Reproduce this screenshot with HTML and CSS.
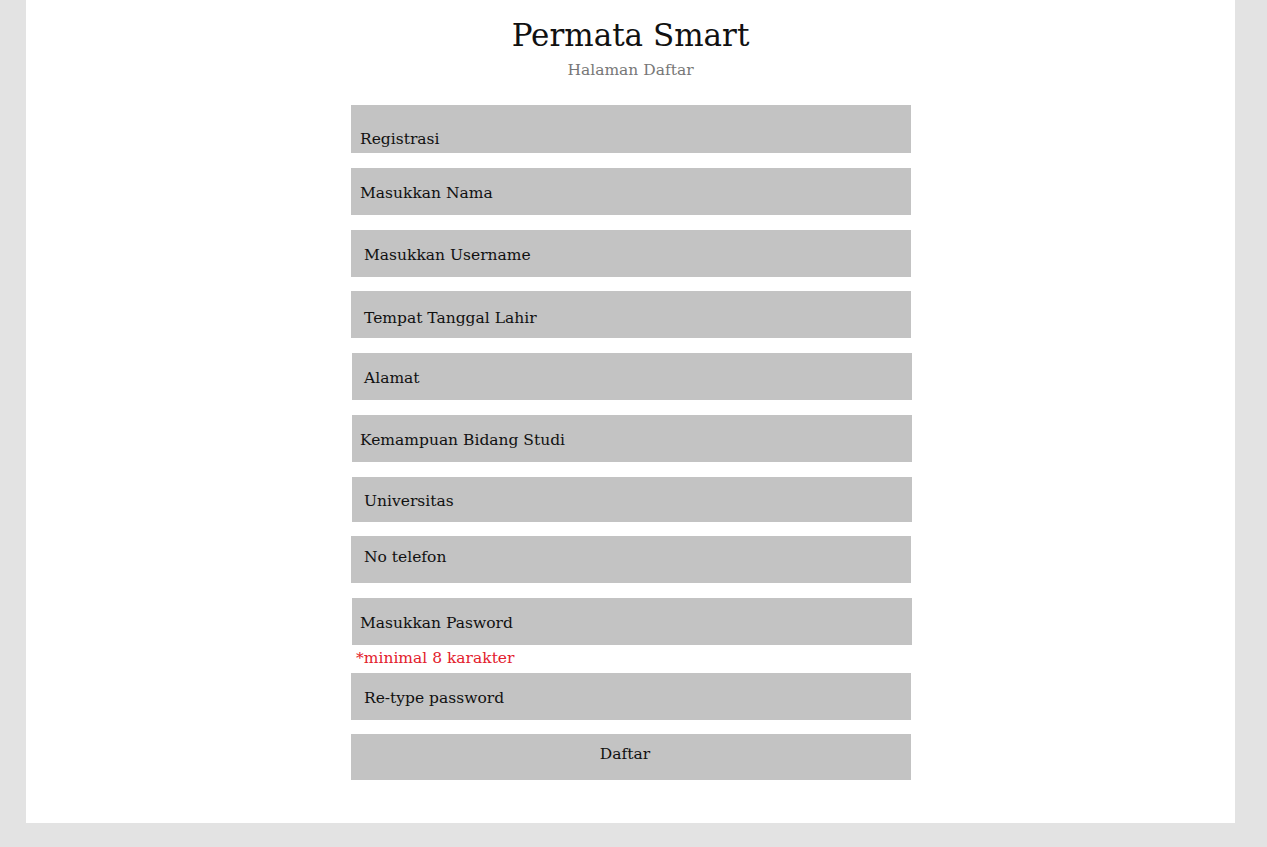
FILE: index.html
```html
<!DOCTYPE html>
<html lang="id">
<head>
<meta charset="utf-8">
<title>Permata Smart - Halaman Daftar</title>
<link rel="stylesheet" href="styles.css">
</head>
<body>
<div class="page">
  <div class="card">
    <header class="head">
      <h1 class="title">Permata Smart</h1>
      <p class="subtitle">Halaman Daftar</p>
    </header>
    <form class="form">
      <div class="field field-top narrow">Registrasi</div>
      <div class="field narrow">Masukkan Nama</div>
      <div class="field wide">Masukkan Username</div>
      <div class="field wide low">Tempat Tanggal Lahir</div>
      <div class="field wide shift">Alamat</div>
      <div class="field narrow shift">Kemampuan Bidang Studi</div>
      <div class="field wide shift short">Universitas</div>
      <div class="field wide high">No telefon</div>
      <div class="field narrow shift">Masukkan Pasword</div>
      <div class="note">*minimal 8 karakter</div>
      <div class="field wide">Re-type password</div>
      <div class="field button">Daftar</div>
    </form>
  </div>
</div>
</body>
</html>
```

FILE: styles.css
```css
html, body {
  margin: 0;
  padding: 0;
  background: #e3e3e3;
}
body {
  font-family: "DejaVu Serif", serif;
  color: #111;
}
.page {
  padding: 0 32px 24px 26px;
}
.card {
  background: #ffffff;
  width: 1209px;
  padding: 14px 0 43px;
  box-sizing: border-box;
}
.head {
  text-align: center;
}
.title {
  margin: 0;
  font-weight: normal;
  font-size: 31px;
  line-height: 42px;
  color: #111;
}
.subtitle {
  margin: 3px 0 0;
  font-size: 15.5px;
  line-height: 22px;
  color: #777;
}
.form {
  width: 560px;
  margin: 24px auto 0 325px;
  display: flex;
  flex-direction: column;
  gap: 14.75px;
}
.field {
  background: #c3c3c3;
  height: 47px;
  display: flex;
  align-items: center;
  padding-top: 3px;
  font-size: 15.5px;
  color: #111;
  box-sizing: border-box;
}
.narrow { padding-left: 9px; }
.wide { padding-left: 13px; }
.shift { margin-left: 1px; margin-right: -1px; }
.shift.wide { padding-left: 12px; }
.shift.narrow { padding-left: 8px; }
.field-top {
  height: 48px;
  align-items: flex-end;
  padding-bottom: 5px;
}
.low { padding-top: 7px; }
.high { padding-top: 0; padding-bottom: 5px; }
.short { height: 45px; }
.note {
  margin: -13px 0 -11px 5px;
  font-size: 15.5px;
  line-height: 22px;
  color: #e3202c;
}
.button {
  justify-content: center;
  padding: 0 12px 6px 0;
  height: 46px;
}
```
